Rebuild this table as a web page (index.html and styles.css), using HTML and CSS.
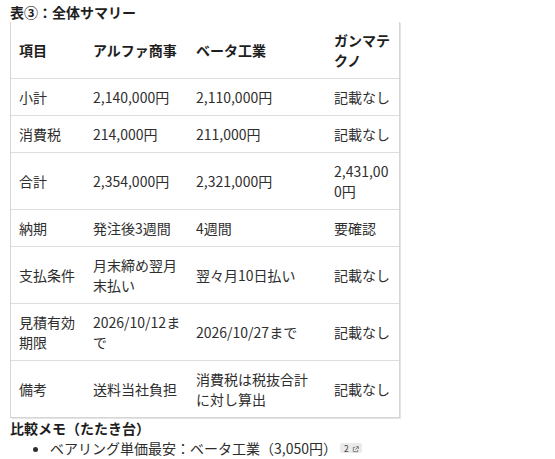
FILE: index.html
```html
<!DOCTYPE html>
<html lang="ja">
<head>
<meta charset="utf-8">
<link rel="stylesheet" href="styles.css">
</head>
<body>
<div class="title">表③：全体サマリー</div>
<div class="table-wrap">
<table class="summary">
<colgroup>
<col class="c1"><col class="c2"><col class="c3"><col class="c4">
</colgroup>
<thead>
<tr><th>項目</th><th>アルファ商事</th><th>ベータ工業</th><th>ガンマテクノ</th></tr>
</thead>
<tbody>
<tr><td>小計</td><td>2,140,000円</td><td>2,110,000円</td><td>記載なし</td></tr>
<tr><td>消費税</td><td>214,000円</td><td>211,000円</td><td>記載なし</td></tr>
<tr><td>合計</td><td>2,354,000円</td><td>2,321,000円</td><td>2,431,000円</td></tr>
<tr><td>納期</td><td>発注後3週間</td><td>4週間</td><td>要確認</td></tr>
<tr><td>支払条件</td><td>月末締め翌月末払い</td><td>翌々月10日払い</td><td>記載なし</td></tr>
<tr><td>見積有効期限</td><td>2026/10/12まで</td><td>2026/10/27まで</td><td>記載なし</td></tr>
<tr><td>備考</td><td>送料当社負担</td><td>消費税は税抜合計に対し算出</td><td>記載なし</td></tr>
</tbody>
</table>
</div>
<div class="subtitle">比較メモ（たたき台）</div>
<ul class="notes">
<li>ベアリング単価最安：ベータ工業（3,050円）<span class="badge">2<svg class="ext" viewBox="0 0 8 8" width="7" height="7"><path d="M3.5 1.5H1.5V6.5H6.5V4.5" fill="none" stroke="#666" stroke-width="0.9"/><path d="M4.5 0.8H7.2V3.5M7.2 0.8L3.8 4.2" fill="none" stroke="#666" stroke-width="0.9"/></svg></span></li>
</ul>
</body>
</html>
```
FILE: styles.css
```css
html, body {
  margin: 0;
  background: #fff;
}
body {
  padding: 2px 10px 0 10px;
  font-family: "Noto Sans CJK JP", "Noto Sans", sans-serif;
  font-size: 14px;
  line-height: 20px;
  color: #2e2e2e;
}
.title {
  font-weight: bold;
  color: #1e1e1e;
}
.table-wrap {
  width: 388px;
  border: 1px solid #d6d6d6;
  border-top: none;
  box-shadow: 1px 1px 0 #e4e4e4;
}
.summary {
  width: 388px;
  table-layout: fixed;
  border-collapse: collapse;
}
.c1 { width: 74px; }
.c2 { width: 103px; }
.c3 { width: 138px; }
.c4 { width: 73px; }
.summary th,
.summary td {
  padding: 8px;
  text-align: left;
  vertical-align: middle;
  word-break: break-all;
}
.summary td:nth-child(2) {
  padding-right: 4px;
}
.summary th {
  font-weight: bold;
  color: #1e1e1e;
}
.summary tr {
  border-bottom: 1px solid #dedede;
}
.summary tbody tr:last-child {
  border-bottom: none;
}
.subtitle {
  font-weight: bold;
  color: #1e1e1e;
}
.notes {
  margin: 0;
  padding-left: 40px;
}
.badge {
  display: inline-block;
  margin-left: 3px;
  padding: 0 3px 0 4px;
  height: 10px;
  line-height: 10px;
  font-size: 8.5px;
  color: #444;
  background: #ebebeb;
  border-radius: 2px;
  vertical-align: 2px;
}
.ext {
  margin-left: 3px;
  vertical-align: -0.5px;
}
```
